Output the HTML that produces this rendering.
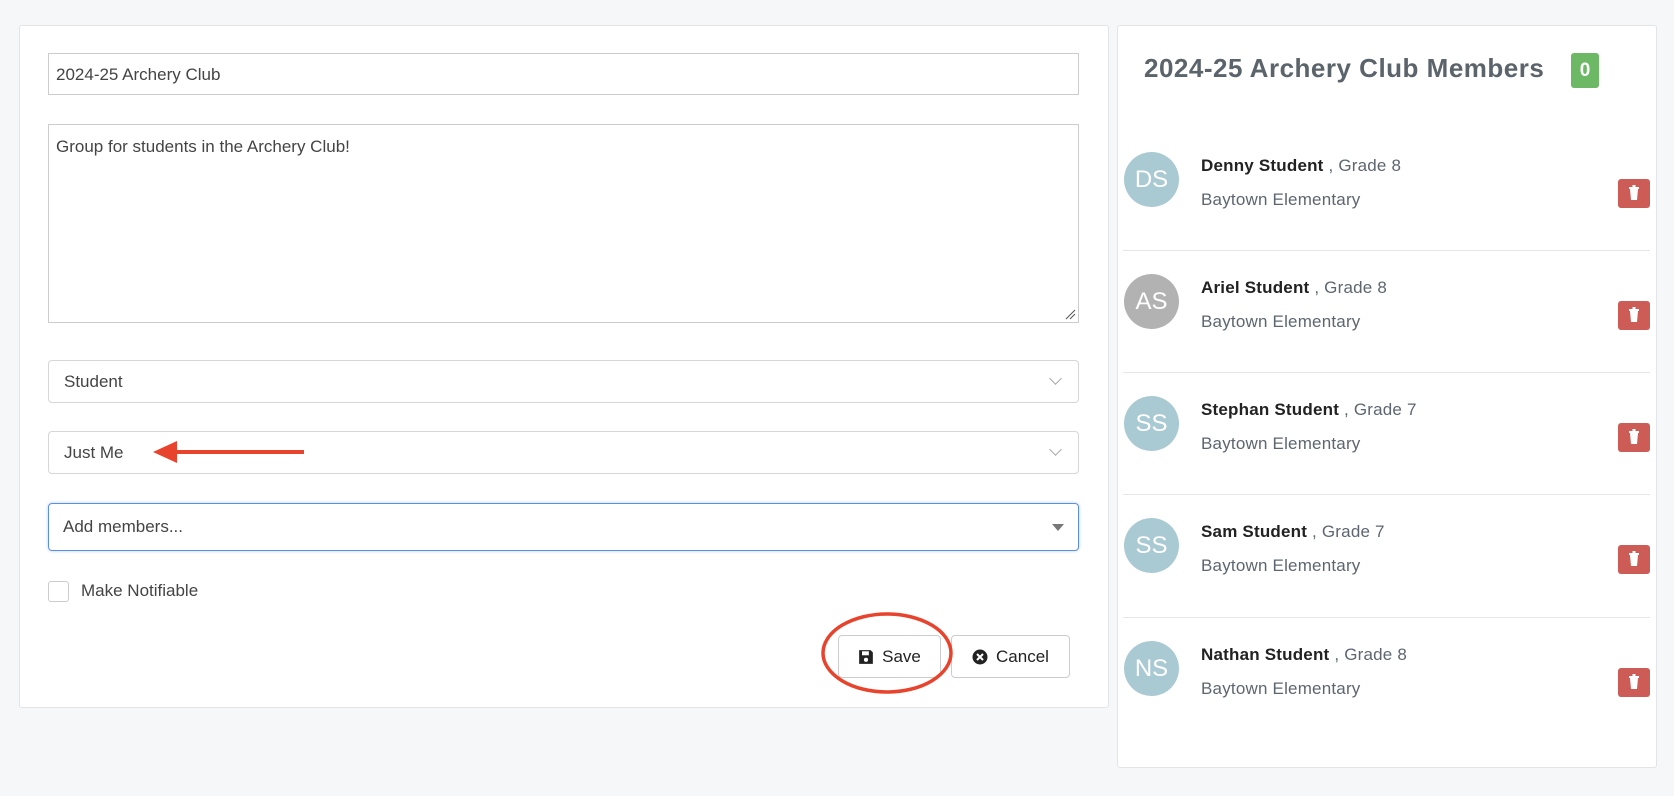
<!DOCTYPE html>
<html><head><style>
*{box-sizing:border-box}
body{margin:0;width:1674px;height:796px;background:#f6f7f9;font-family:"Liberation Sans",sans-serif;position:relative;overflow:hidden;color:#444}
.abs{position:absolute}
.panel{position:absolute;background:#fff;border:1px solid #e2e4e8;border-radius:3px}
.inp{position:absolute;left:48px;width:1031px;border:1px solid #ccc;background:#fff;font-size:17px;color:#444}
.sel{border-radius:4px;border-color:#d6d6d6}
.chev{position:absolute;right:18px;top:13px;width:9px;height:9px;border-right:1px solid #aaa;border-bottom:1px solid #aaa;transform:rotate(45deg)}
.row{position:absolute;left:1123px;width:527px;height:122px}
.av{position:absolute;left:1px;width:55px;height:55px;border-radius:50%;color:#fff;font-size:24px;text-align:center;line-height:55px}
.nm{position:absolute;left:78px;font-size:17px;color:#222;font-weight:bold;letter-spacing:0.2px}
.nm span{font-weight:normal;color:#5d6670}
.sc{position:absolute;left:78px;font-size:17px;color:#5d6670;letter-spacing:0.2px}
.tr{position:absolute;left:495px;width:32px;height:29px;background:#cd5c57;border-radius:3px}
.sep{position:absolute;left:1123px;width:527px;height:1px;background:#e6e6e6}
.btn{position:absolute;top:635px;height:43px;border:1px solid #ccc;border-radius:4px;background:#fff;font-size:17px;color:#222;display:flex;align-items:center;justify-content:center;gap:8px}
</style></head><body>
<div class="panel" style="left:19px;top:25px;width:1090px;height:683px"></div>
<div class="panel" style="left:1117px;top:25px;width:540px;height:743px"></div>

<div class="inp" style="top:53px;height:42px;padding:11px 7px">2024-25 Archery Club</div>
<div class="inp" style="top:124px;height:199px;padding:12px 7px">Group for students in the Archery Club!
<svg class="abs" style="right:2px;bottom:2px" width="12" height="12"><path d="M2 11L11 2M6 11L11 6" stroke="#555" stroke-width="1"/></svg></div>
<div class="inp sel" style="top:360px;height:43px;padding:11px 15px">Student<div class="chev"></div></div>
<div class="inp sel" style="top:431px;height:43px;padding:11px 15px">Just Me<div class="chev"></div></div>
<div class="inp" style="top:503px;height:48px;padding:13px 14px;border:1px solid #5b8fe6;border-radius:4px;box-shadow:0 0 3px rgba(80,140,230,.4)">Add members...
<div class="abs" style="right:14px;top:20px;width:0;height:0;border-left:6px solid transparent;border-right:6px solid transparent;border-top:7px solid #777"></div></div>

<div class="abs" style="left:48px;top:581px;width:21px;height:21px;border:1px solid #ccc;border-radius:3px;background:#fff"></div>
<div class="abs" style="left:81px;top:581px;font-size:17px;color:#444">Make Notifiable</div>

<svg class="abs" style="left:150px;top:440px" width="160" height="26"><path d="M20 12H154" stroke="#e8432c" stroke-width="4"/><path d="M3 12L27 1V23Z" fill="#e8432c"/></svg>

<div class="btn" style="left:838px;width:103px"><svg width="16" height="16" viewBox="0 0 14 14"><path d="M1 1H11L13 3V13H1Z" fill="#222"/><rect x="3.5" y="2" width="6" height="3.5" fill="#fff"/><circle cx="7" cy="9.5" r="1.8" fill="#fff"/></svg>Save</div>
<div class="btn" style="left:951px;width:119px"><svg width="16" height="16" viewBox="0 0 16 16"><circle cx="8" cy="8" r="7.5" fill="#222"/><path d="M5 5L11 11M11 5L5 11" stroke="#fff" stroke-width="2"/></svg>Cancel</div>
<svg class="abs" style="left:818px;top:610px" width="140" height="88"><ellipse cx="69" cy="43" rx="64" ry="39" fill="none" stroke="#e8432c" stroke-width="3.5"/></svg>

<div class="abs" style="left:1144px;top:53px;font-size:26px;font-weight:bold;color:#5b636b;letter-spacing:0.5px">2024-25 Archery Club Members</div>
<div class="abs" style="left:1571px;top:53px;width:28px;height:35px;background:#6cb865;border-radius:3px;color:#fff;font-weight:bold;font-size:19px;text-align:center;line-height:35px">0</div>

<div class="row" style="top:137px"><div class="av" style="top:15px;background:#a9c9d3">DS</div><div class="nm" style="top:19px">Denny Student <span>, Grade 8</span></div><div class="sc" style="top:53px">Baytown Elementary</div><div class="tr" style="top:42px"><svg width="32" height="29"><path d="M12 10H20L19 21H13Z" fill="#fff"/><rect x="11" y="8" width="10" height="2" fill="#fff"/><rect x="14.5" y="6" width="3" height="2" fill="#fff"/></svg></div></div>
<div class="sep" style="top:250px"></div>
<div class="row" style="top:259px"><div class="av" style="top:15px;background:#b2b2b2">AS</div><div class="nm" style="top:19px">Ariel Student <span>, Grade 8</span></div><div class="sc" style="top:53px">Baytown Elementary</div><div class="tr" style="top:42px"><svg width="32" height="29"><path d="M12 10H20L19 21H13Z" fill="#fff"/><rect x="11" y="8" width="10" height="2" fill="#fff"/><rect x="14.5" y="6" width="3" height="2" fill="#fff"/></svg></div></div>
<div class="sep" style="top:372px"></div>
<div class="row" style="top:381px"><div class="av" style="top:15px;background:#a9c9d3">SS</div><div class="nm" style="top:19px">Stephan Student <span>, Grade 7</span></div><div class="sc" style="top:53px">Baytown Elementary</div><div class="tr" style="top:42px"><svg width="32" height="29"><path d="M12 10H20L19 21H13Z" fill="#fff"/><rect x="11" y="8" width="10" height="2" fill="#fff"/><rect x="14.5" y="6" width="3" height="2" fill="#fff"/></svg></div></div>
<div class="sep" style="top:494px"></div>
<div class="row" style="top:503px"><div class="av" style="top:15px;background:#a9c9d3">SS</div><div class="nm" style="top:19px">Sam Student <span>, Grade 7</span></div><div class="sc" style="top:53px">Baytown Elementary</div><div class="tr" style="top:42px"><svg width="32" height="29"><path d="M12 10H20L19 21H13Z" fill="#fff"/><rect x="11" y="8" width="10" height="2" fill="#fff"/><rect x="14.5" y="6" width="3" height="2" fill="#fff"/></svg></div></div>
<div class="sep" style="top:617px"></div>
<div class="row" style="top:626px"><div class="av" style="top:15px;background:#a9c9d3">NS</div><div class="nm" style="top:19px">Nathan Student <span>, Grade 8</span></div><div class="sc" style="top:53px">Baytown Elementary</div><div class="tr" style="top:42px"><svg width="32" height="29"><path d="M12 10H20L19 21H13Z" fill="#fff"/><rect x="11" y="8" width="10" height="2" fill="#fff"/><rect x="14.5" y="6" width="3" height="2" fill="#fff"/></svg></div></div>
</body></html>
